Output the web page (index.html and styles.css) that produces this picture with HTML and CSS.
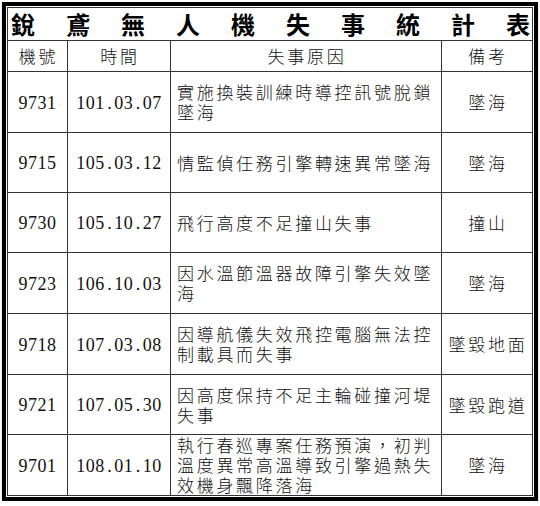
FILE: index.html
```html
<!DOCTYPE html>
<html lang="zh-Hant">
<head>
<meta charset="utf-8">
<title>銳鳶無人機失事統計表</title>
<link rel="stylesheet" href="styles.css">
</head>
<body>
<div class="frame">
  <div class="sheet">
    <div class="title">
      <span>銳</span><span>鳶</span><span>無</span><span>人</span><span>機</span><span>失</span><span>事</span><span>統</span><span>計</span><span>表</span>
    </div>

    <div class="c head">機號</div>
    <div class="c head">時間</div>
    <div class="c head">失事原因</div>
    <div class="c head last">備考</div>

    <div class="c num r1">9731</div>
    <div class="c num r1">101<span class="dot">.</span>03<span class="dot">.</span>07</div>
    <div class="c reason r1"><p>實施換裝訓練時導控訊號脫鎖墜海</p></div>
    <div class="c note last r1">墜海</div>

    <div class="c num">9715</div>
    <div class="c num">105<span class="dot">.</span>03<span class="dot">.</span>12</div>
    <div class="c reason"><p>情監偵任務引擎轉速異常墜海</p></div>
    <div class="c note last">墜海</div>

    <div class="c num">9730</div>
    <div class="c num">105<span class="dot">.</span>10<span class="dot">.</span>27</div>
    <div class="c reason"><p>飛行高度不足撞山失事</p></div>
    <div class="c note last">撞山</div>

    <div class="c num r1">9723</div>
    <div class="c num r1">106<span class="dot">.</span>10<span class="dot">.</span>03</div>
    <div class="c reason r1"><p>因水溫節溫器故障引擎失效墜海</p></div>
    <div class="c note last r1">墜海</div>

    <div class="c num r1">9718</div>
    <div class="c num r1">107<span class="dot">.</span>03<span class="dot">.</span>08</div>
    <div class="c reason r1"><p>因導航儀失效飛控電腦無法控制載具而失事</p></div>
    <div class="c note last r1">墜毀地面</div>

    <div class="c num">9721</div>
    <div class="c num">107<span class="dot">.</span>05<span class="dot">.</span>30</div>
    <div class="c reason"><p>因高度保持不足主輪碰撞河堤失事</p></div>
    <div class="c note last">墜毀跑道</div>

    <div class="c num end">9701</div>
    <div class="c num end">108<span class="dot">.</span>01<span class="dot">.</span>10</div>
    <div class="c reason end"><p>執行春巡專案任務預演，初判溫度異常高溫導致引擎過熱失效機身飄降落海</p></div>
    <div class="c note last end">墜海</div>
  </div>
</div>
</body>
</html>
```

FILE: styles.css
```css
* {
  box-sizing: border-box;
}

body {
  margin: 0;
  background: #fff;
  color: #111;
  font-family: "Noto Sans CJK TC", "Noto Sans CJK SC", sans-serif;
}

.frame {
  margin: 2px 0 0 2px;
  width: 536px;
  border: 4px solid #000;
  padding: 1px;
  box-shadow: 0 1px 1px #888;
}

.sheet {
  display: grid;
  grid-template-columns: 60px 103px 271px 90px;
  grid-template-rows: 33px 31px 61px 60px 60px 61px 61px 60px 60px;
  border: 1px solid #333;
}

.title {
  grid-column: 1 / -1;
  display: flex;
  justify-content: space-between;
  align-items: center;
  padding: 0 2px 0 3px;
  border-bottom: 1px solid #333;
  font-size: 24px;
  font-weight: 700;
  line-height: 1;
  color: #000;
}

.c {
  display: flex;
  align-items: center;
  justify-content: center;
  border-right: 1px solid #333;
  border-bottom: 1px solid #333;
  font-size: 17px;
  font-weight: 300;
  letter-spacing: 2.7px;
  line-height: 20px;
}

.c.last {
  border-right: none;
}

.c.end {
  border-bottom: none;
}

.head {
  padding-left: 2px;
}

.note {
  padding-left: 2px;
}

.num {
  font-family: "Liberation Serif", serif;
  font-size: 18px;
  font-weight: 400;
  letter-spacing: 0.5px;
  padding-top: 1px;
}

.dot {
  display: inline-block;
  width: 9.5px;
  text-align: center;
  letter-spacing: 0;
}

.reason {
  justify-content: flex-start;
  padding-left: 6px;
}

.reason p {
  margin: 0;
}
```
